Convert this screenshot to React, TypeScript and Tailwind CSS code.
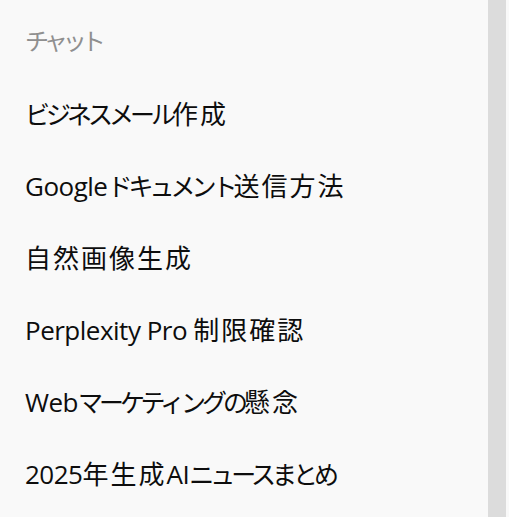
import React from "react";

const items = [
  "ビジネスメール作成",
  "Googleドキュメント送信方法",
  "自然画像生成",
  "Perplexity Pro 制限確認",
  "Webマーケティングの懸念",
  "2025年生成AIニュースまとめ",
];

type Run = { kind: "kana" | "kanji" | "latin"; text: string };

function split(text: string): Run[] {
  const runs: Run[] = [];
  for (const ch of text) {
    const code = ch.codePointAt(0) ?? 0;
    const kind: Run["kind"] =
      code >= 0x3040 && code <= 0x30ff
        ? "kana"
        : code >= 0x4e00 && code <= 0x9fff
        ? "kanji"
        : "latin";
    const last = runs[runs.length - 1];
    if (last && last.kind === kind) last.text += ch;
    else runs.push({ kind, text: ch });
  }
  return runs;
}

function Label({ text }: { text: string }) {
  return (
    <>
      {split(text).map((r, i) => {
        if (r.kind === "kana")
          return (
            <span key={i} className="text-[25px] tracking-[-4px]">
              {r.text}
            </span>
          );
        if (r.kind === "kanji")
          return (
            <span key={i} className="text-[26px] tracking-[2px]">
              {r.text}
            </span>
          );
        return (
          <span key={i} className="text-[26px] tracking-[-0.5px]">
            {r.text}
          </span>
        );
      })}
    </>
  );
}

export default function App() {
  return (
    <div className="flex h-[517px] w-[509px] overflow-hidden bg-[#f9f9f9] font-['Open_Sans','Noto_Sans_CJK_JP',sans-serif]">
      <div className="flex flex-1 flex-col pl-[25px]">
        <div className="flex h-[78px] items-center pt-[4px] text-[24px] tracking-[-5px] text-[#8f8f8f]">
          チャット
        </div>
        {items.map((t) => (
          <div
            key={t}
            className="flex h-[72px] shrink-0 items-center whitespace-nowrap text-[#0d0d0d]"
          >
            <span>
              <Label text={t} />
            </span>
          </div>
        ))}
      </div>
      <div className="h-full w-[18px] bg-[#dcdcdc]" />
      <div className="h-full w-[3px]" />
    </div>
  );
}
